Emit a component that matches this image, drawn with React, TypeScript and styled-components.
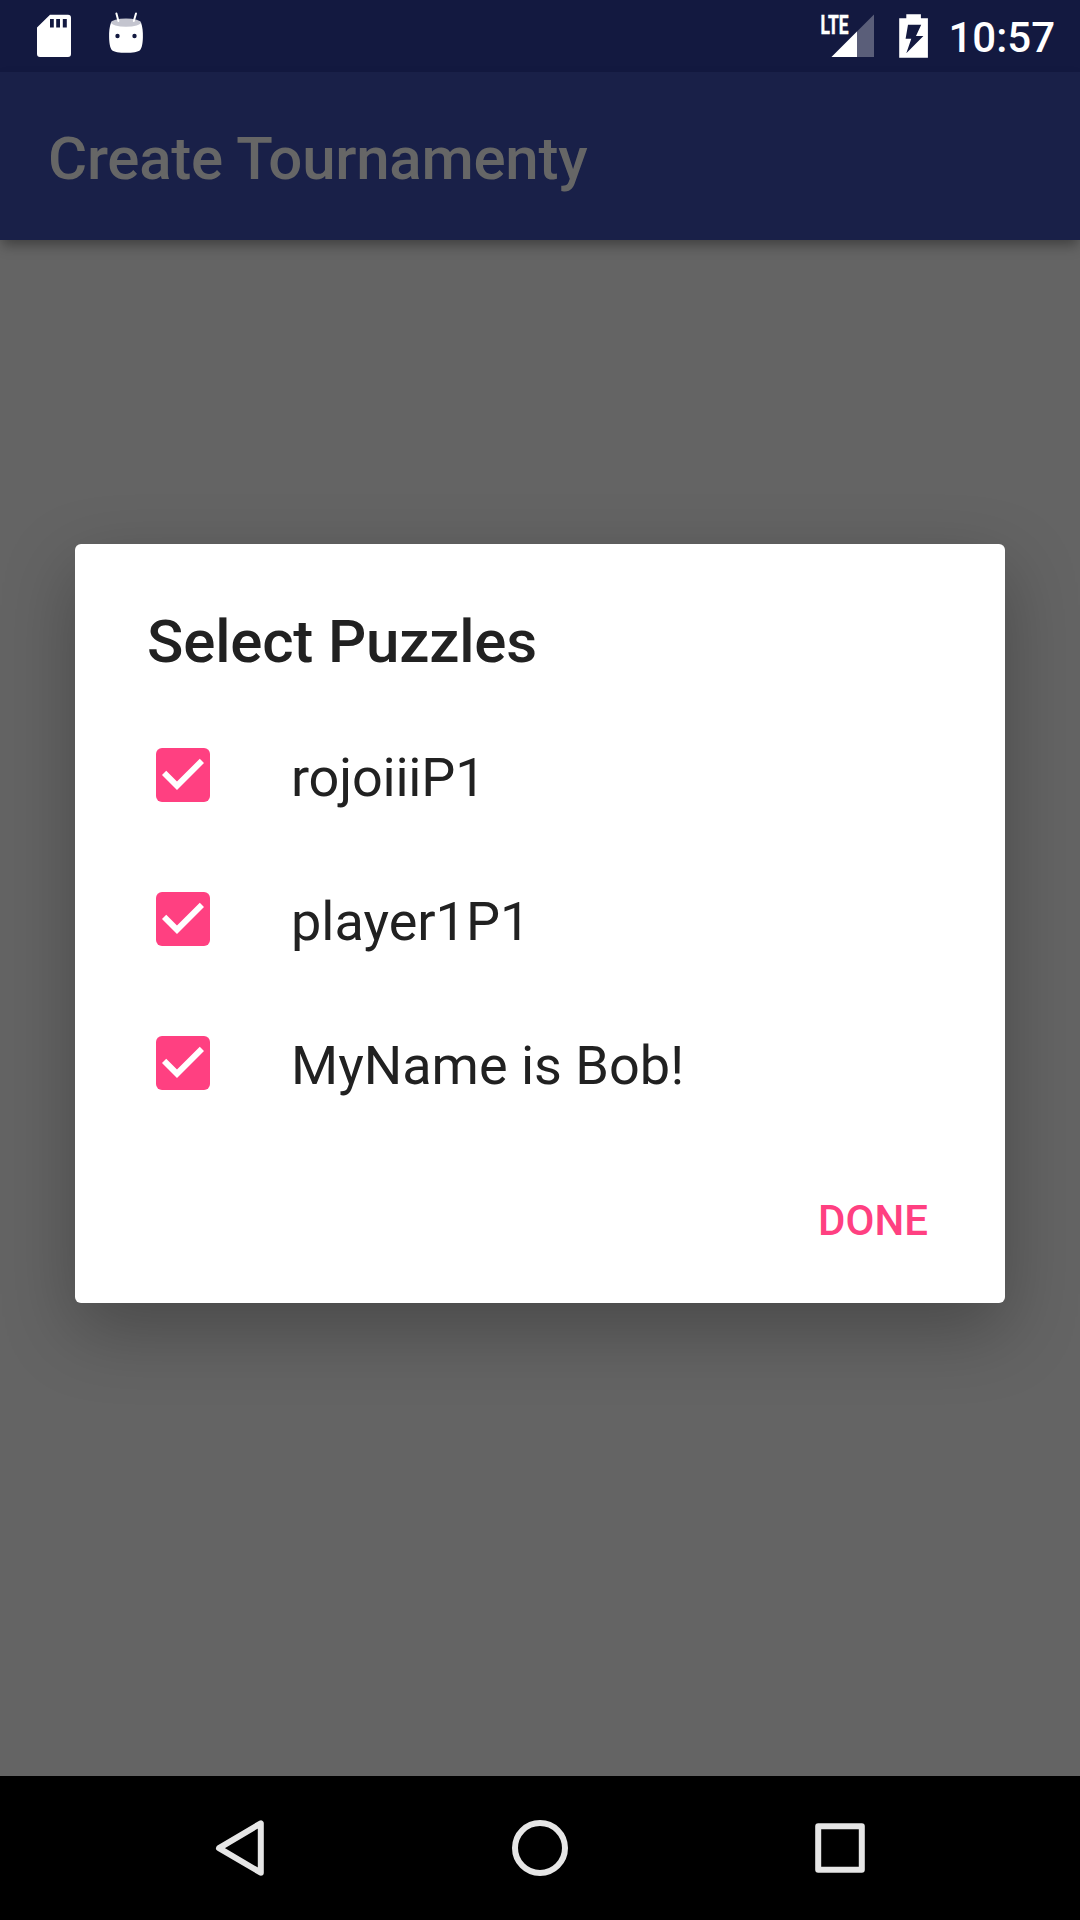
import React, { useState } from "react";
import styled, { createGlobalStyle } from "styled-components";

const GlobalStyle = createGlobalStyle`
  body { margin: 0; background: #646464; }
  *, *::before, *::after { box-sizing: border-box; }
`;

const Screen = styled.div`
  display: flex;
  flex-direction: column;
  width: 1080px;
  height: 1920px;
  overflow: hidden;
  background: #646464;
  font-family: Roboto, "Noto Sans", sans-serif;
`;

const StatusBar = styled.header`
  display: flex;
  justify-content: space-between;
  flex: 0 0 72px;
  padding: 0 25px 0 36px;
  background: #131940;
`;

const StatusGroup = styled.div<{ $gap: number }>`
  display: flex;
  gap: ${(p) => p.$gap}px;
`;

const Icon = styled.svg`
  display: block;
  flex: none;
`;

const Clock = styled.time`
  margin-left: -4px;
  padding-top: 4px;
  color: #fff;
  font-size: 42px;
  font-weight: 500;
  line-height: 67px;
`;

const Toolbar = styled.div`
  position: relative;
  display: flex;
  flex: 0 0 168px;
  align-items: center;
  padding: 5px 48px 0;
  background: #192048;
  box-shadow: 0 7px 12px -2px rgba(0, 0, 0, 0.36);
`;

const ToolbarTitle = styled.h1`
  margin: 0;
  color: #666;
  font-size: 60px;
  font-weight: 500;
  letter-spacing: -0.26px;
  line-height: 71px;
`;

const Content = styled.main`
  display: flex;
  flex: 1;
  flex-direction: column;
  align-items: center;
  padding-top: 304px;
`;

const Dialog = styled.section`
  display: flex;
  flex-direction: column;
  width: 930px;
  height: 759px;
  padding-top: 62px;
  border-radius: 6px;
  background: #fff;
  box-shadow: 0 26px 72px rgba(0, 0, 0, 0.28);
`;

const DialogTitle = styled.h2`
  margin: 0 0 26px;
  padding: 0 72px;
  color: #212121;
  font-size: 60px;
  font-weight: 500;
  letter-spacing: -0.17px;
  line-height: 71px;
`;

const OptionList = styled.div`
  display: flex;
  flex-direction: column;
`;

const Option = styled.button`
  display: flex;
  align-items: center;
  gap: 81px;
  height: 144px;
  padding: 0 81px;
  border: 0;
  background: none;
  font-family: inherit;
  text-align: left;
`;

const OptionLabel = styled.span<{ $tracking: number }>`
  padding-top: 5px;
  color: #212121;
  font-size: 54px;
  letter-spacing: ${(p) => p.$tracking}px;
  line-height: 63px;
`;

const Actions = styled.footer`
  display: flex;
  flex: 1;
  align-items: center;
  justify-content: flex-end;
  padding: 3px 77px 0;
`;

const ActionButton = styled.button`
  padding: 0;
  border: 0;
  background: none;
  color: #ff4081;
  font-family: inherit;
  font-size: 42px;
  font-weight: 500;
  line-height: 49px;
`;

const NavBar = styled.nav`
  display: flex;
  flex: 0 0 144px;
  justify-content: center;
  background: #000;
`;

const NavButton = styled.button`
  display: flex;
  align-items: center;
  justify-content: center;
  width: 300px;
  padding: 0;
  border: 0;
  background: none;
`;

function SdCardIcon() {
  return (
    <Icon width="36" height="72" viewBox="36 0 36 72">
      <path
        fill="#fff"
        fillRule="evenodd"
        d="M50 14.7H68a3 3 0 0 1 3 3V54a3 3 0 0 1-3 3H40a3 3 0 0 1-3-3V27.5ZM50 19v8.5h3.8V19ZM56.2 19v8.5H60V19ZM62.8 19v8.5h4V19Z"
      />
    </Icon>
  );
}

function DroidIcon() {
  return (
    <Icon width="36" height="72" viewBox="108 0 36 72">
      <path
        fill="#fff"
        d="M111 22.5C109.400 27 109 32 109.100 37C109.200 43 110 48 112 50.300C115 53.700 137 53.700 140 50.300C142 48 142.800 43 142.900 37C143 32 142.600 27 141 22.500Z"
      />
      <ellipse cx="126" cy="22.600" rx="15" ry="4.100" fill="#c4c5cf" />
      <path d="M116.400 13.500l2 7.500M136 13.500l-2.200 7.500" stroke="#fff" strokeWidth="2" strokeLinecap="round" />
      <circle cx="117.500" cy="36" r="2.200" fill="#131940" />
      <circle cx="134.500" cy="36" r="2.200" fill="#131940" />
    </Icon>
  );
}

function SignalIcon() {
  return (
    <Icon width="56" height="72" viewBox="820 0 56 72">
      <path d="M874 14.500V57h-42.500Z" fill="#fff" fillOpacity="0.300" />
      <path d="M857 31.500V57h-25.500Z" fill="#fff" />
      <text
        x="820.500"
        y="33.500"
        fill="#fff"
        stroke="#fff"
        strokeWidth="0.500"
        fontFamily="Roboto, sans-serif"
        fontSize="26"
        fontWeight="700"
        textLength="28"
        lengthAdjust="spacingAndGlyphs"
      >
        LTE
      </text>
    </Icon>
  );
}

function BatteryIcon() {
  return (
    <Icon width="30" height="72" viewBox="899 0 30 72">
      <path
        fill="#fff"
        fillRule="evenodd"
        d="M906.300 14.300h14.600v4h7v39.500h-28.700V18.300h7.100ZM908 24.700L905.600 38.800H911.300L906.300 53.300L923.400 36H916L921.200 24.700Z"
      />
    </Icon>
  );
}

function CheckIcon({ checked }: { checked: boolean }) {
  return (
    <Icon width="54" height="54" viewBox="3 3 18 18">
      {checked ? (
        <>
          <rect x="3" y="3" width="18" height="18" rx="2" fill="#ff4081" />
          <path d="M10 17l-5-5 1.410-1.410L10 14.170l7.590-7.590L19 8z" fill="#fff" />
        </>
      ) : (
        <rect x="4" y="4" width="16" height="16" rx="1" fill="none" stroke="#757575" strokeWidth="2" />
      )}
    </Icon>
  );
}

const puzzles = [
  { name: "rojoiiiP1", tracking: -0.2 },
  { name: "player1P1", tracking: 0 },
  { name: "MyName is Bob!", tracking: 0 },
];

export default function App() {
  const [selected, setSelected] = useState<boolean[]>(puzzles.map(() => true));
  const toggle = (index: number) =>
    setSelected((current) => current.map((value, i) => (i === index ? !value : value)));

  return (
    <>
      <GlobalStyle />
      <Screen>
        <StatusBar>
          <StatusGroup $gap={36}>
            <SdCardIcon />
            <DroidIcon />
          </StatusGroup>
          <StatusGroup $gap={23}>
            <SignalIcon />
            <BatteryIcon />
            <Clock>10:57</Clock>
          </StatusGroup>
        </StatusBar>
        <Toolbar>
          <ToolbarTitle>Create Tournamenty</ToolbarTitle>
        </Toolbar>
        <Content>
          <Dialog role="dialog">
            <DialogTitle>Select Puzzles</DialogTitle>
            <OptionList>
              {puzzles.map(({ name, tracking }, index) => (
                <Option
                  key={name}
                  role="checkbox"
                  aria-checked={selected[index]}
                  onClick={() => toggle(index)}
                >
                  <CheckIcon checked={selected[index]} />
                  <OptionLabel $tracking={tracking}>{name}</OptionLabel>
                </Option>
              ))}
            </OptionList>
            <Actions>
              <ActionButton>DONE</ActionButton>
            </Actions>
          </Dialog>
        </Content>
        <NavBar>
          <NavButton>
            <Icon width="84" height="84" viewBox="0 0 84 84" fill="none" stroke="#e6e6e6" strokeWidth="6" strokeLinejoin="round">
              <path d="M62.800 17.300V66.700L21 42.200Z" />
            </Icon>
          </NavButton>
          <NavButton>
            <Icon width="84" height="84" viewBox="0 0 84 84" fill="none" stroke="#e6e6e6" strokeWidth="6">
              <circle cx="42" cy="42" r="25" />
            </Icon>
          </NavButton>
          <NavButton>
            <Icon width="84" height="84" viewBox="0 0 84 84" fill="none" stroke="#e6e6e6" strokeWidth="6" strokeLinejoin="round">
              <rect x="20.200" y="20.200" width="43.600" height="43.600" />
            </Icon>
          </NavButton>
        </NavBar>
      </Screen>
    </>
  );
}
